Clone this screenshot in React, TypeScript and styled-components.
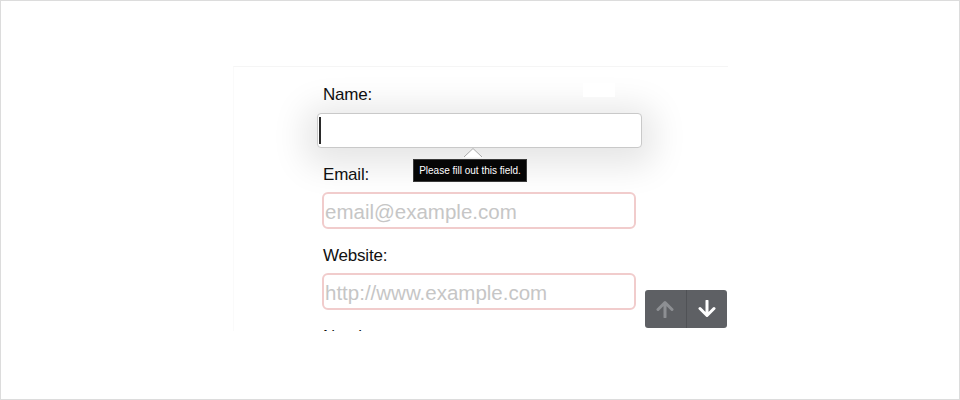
import React from "react";
import styled, { createGlobalStyle } from "styled-components";

const Global = createGlobalStyle`
  html, body { margin: 0; padding: 0; background: #ffffff; }
  * { box-sizing: border-box; }
`;

const Frame = styled.div`
  width: 960px;
  height: 400px;
  border: 1px solid #dcdcdc;
  background: #ffffff;
  padding: 65px 0 0 232px;
  font-family: "Liberation Sans", Arial, sans-serif;
`;

const Stage = styled.div`
  position: relative;
  width: 495px;
  height: 265px;
  overflow: hidden;
  border-top: 1px solid #f5f5f5;
  border-left: 1px solid #fafafa;
`;

const Form = styled.form`
  display: flex;
  flex-direction: column;
  padding: 18px 0 0 89px;
  margin: 0;
`;

const Label = styled.label<{ $gap: number }>`
  display: block;
  font-size: 17px;
  line-height: 20px;
  letter-spacing: -0.2px;
  color: #111111;
  margin-bottom: ${(p) => p.$gap}px;
`;

const ActiveBox = styled.div`
  width: 325px;
  height: 35px;
  margin: 0 0 17px -6px;
  border: 1px solid #c9c9c9;
  border-radius: 4px;
  background: #ffffff;
  box-shadow: 0 6px 34px 12px rgba(0, 0, 0, 0.1);
  display: flex;
  align-items: center;
  padding-left: 1px;
`;

const Caret = styled.span`
  width: 2px;
  height: 27px;
  background: #2a2a2a;
`;

const Field = styled.input`
  width: 314px;
  height: 37px;
  margin: 0 0 17px -1px;
  border: 2px solid #f1cccc;
  border-radius: 6px;
  background: #ffffff;
  padding: 2px 0 0 1px;
  font-family: "Liberation Sans", Arial, sans-serif;
  font-size: 20.5px;
  color: #222;
  outline: none;
  &::placeholder {
    color: #c6c6c6;
  }
`;

const Patch = styled.span`
  position: absolute;
  left: 349px;
  top: 16px;
  width: 32px;
  height: 14px;
  background: #ffffff;
`;

const TipArrow = styled.svg`
  position: absolute;
  left: 228px;
  top: 80px;
`;

const Tooltip = styled.div`
  position: absolute;
  left: 179px;
  top: 92px;
  width: 114px;
  height: 23px;
  background: #050505;
  border: 1px solid #3a3a3a;
  color: #ffffff;
  font-size: 10px;
  line-height: 21px;
  text-align: center;
  white-space: nowrap;
`;

const Nav = styled.div`
  position: absolute;
  left: 411px;
  top: 223px;
  width: 82px;
  height: 38px;
  display: flex;
  background: #5e6064;
  border-radius: 3px;
  overflow: hidden;
`;

const NavButton = styled.div<{ $enabled: boolean }>`
  flex: 1;
  display: flex;
  align-items: center;
  justify-content: center;
  color: ${(p) => (p.$enabled ? "#ffffff" : "#8d8f93")};
  & + & {
    border-left: 1px solid #505256;
  }
`;

const Arrow = ({ down }: { down?: boolean }) => (
  <svg width="20" height="18" viewBox="0 0 20 18" style={{ transform: down ? "rotate(180deg)" : undefined }}>
    <path
      d="M10 17V3 M3 9.5L10 2.5 17 9.5"
      fill="none"
      stroke="currentColor"
      strokeWidth="3"
      strokeLinecap="round"
      strokeLinejoin="round"
    />
  </svg>
);

export default function App() {
  return (
    <>
      <Global />
      <Frame>
        <Stage>
          <Form onSubmit={(e) => e.preventDefault()}>
            <Label $gap={8}>Name:</Label>
            <ActiveBox>
              <Caret />
            </ActiveBox>
            <Label $gap={7}>Email:</Label>
            <Field type="email" placeholder="email@example.com" readOnly />
            <Label $gap={7}>Website:</Label>
            <Field type="url" placeholder="http://www.example.com" readOnly />
            <Label $gap={7}>Number:</Label>
          </Form>
          <Patch />
          <TipArrow width="22" height="11" viewBox="0 0 22 11">
            <path d="M1 10.5L11 1 21 10.5Z" fill="#ffffff" stroke="none" />
            <path d="M2 10L11 1.5 20 10" fill="none" stroke="#a8a8a8" strokeWidth="1" />
          </TipArrow>
          <Tooltip>Please fill out this field.</Tooltip>
          <Nav>
            <NavButton $enabled={false}>
              <Arrow />
            </NavButton>
            <NavButton $enabled={true}>
              <Arrow down />
            </NavButton>
          </Nav>
        </Stage>
      </Frame>
    </>
  );
}
